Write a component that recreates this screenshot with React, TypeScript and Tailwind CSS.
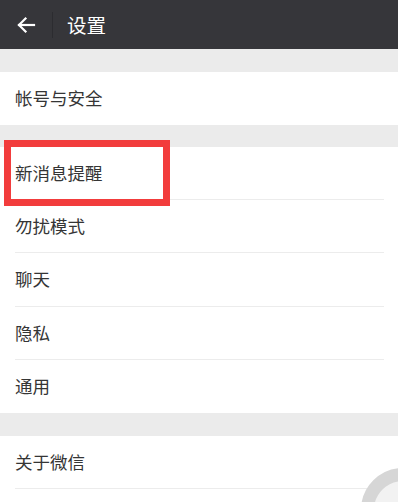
import React from "react";

const font = { fontFamily: '"Noto Sans CJK SC", "Noto Sans", sans-serif' };

function Item({ label, divider = true, h = "h-[53px]" }: { label: string; divider?: boolean; h?: string }) {
  return (
    <div className={`${h} bg-white flex flex-col`}>
      <div className="flex-1 flex items-center pl-[15px] text-[17.5px] text-[#353535]">{label}</div>
      {divider ? <div className="h-px bg-[#ececec] ml-[15px] mr-[14px]" /> : <div className="h-px" />}
    </div>
  );
}

export default function App() {
  return (
    <div className="relative w-[398px] h-[502px] overflow-hidden bg-[#ebebeb]" style={font}>
      <div className="h-[49px] bg-[#36363a] flex items-center">
        <div className="w-[52px] h-full flex items-center justify-center">
          <svg width="20" height="18" viewBox="0 0 20 18" fill="none" stroke="white" strokeWidth="2.2" strokeLinecap="square">
            <path d="M18 9H3" />
            <path d="M9.5 2.5L3 9l6.5 6.5" />
          </svg>
        </div>
        <div className="w-px h-[26px] bg-[#2c2c30]" />
        <div className="pl-[14px] text-[19.5px] text-white">设置</div>
      </div>
      <div className="h-[23px]" />
      <Item label="帐号与安全" divider={false} />
      <div className="h-[22px]" />
      <Item label="新消息提醒" />
      <Item label="勿扰模式" />
      <Item label="聊天" h="h-[54px]" />
      <Item label="隐私" />
      <Item label="通用" divider={false} />
      <div className="h-[23px]" />
      <Item label="关于微信" />
      <div className="h-[40px] bg-white" />

      <div className="absolute left-[4px] top-[140px] w-[166px] h-[66px] border-[7px] border-[#f23c3c]" />
      <div className="absolute left-[361px] top-[468px] w-[84px] h-[84px] rounded-full border-[13px] border-[#d6d6d6] bg-[#f2f2f2]" />
    </div>
  );
}
